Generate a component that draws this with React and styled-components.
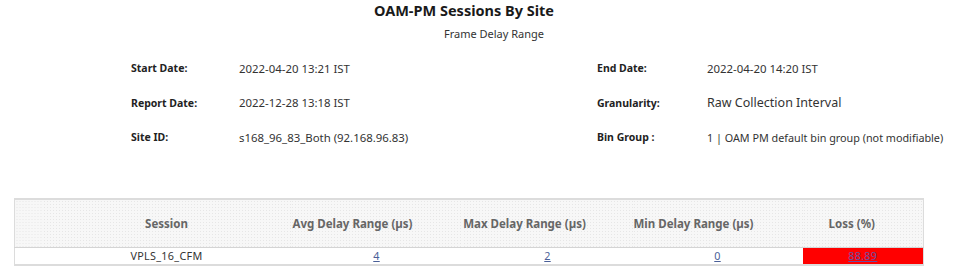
import React from "react";
import styled, { createGlobalStyle } from "styled-components";

const GlobalStyle = createGlobalStyle`
  body {
    margin: 0;
    background: #ffffff;
    font-family: "Noto Sans", "Open Sans", Arial, sans-serif;
    color: #333;
  }
`;

// label / value pairs, left then right column; size overrides the value font
const info = [
  ["Start Date:", "2022-04-20 13:21 IST", "End Date:", "2022-04-20 14:20 IST"],
  ["Report Date:", "2022-12-28 13:18 IST", "Granularity:", "Raw Collection Interval", 12.5],
  ["Site ID:", "s168_96_83_Both (92.168.96.83)", "Bin Group :", "1 | OAM PM default bin group (not modifiable)", 10.8],
];

const columns = [
  { key: "pad", label: "", width: 28, shift: 0 },
  { key: "session", label: "Session", width: 248, shift: 0 },
  { key: "avg", label: "Avg Delay Range (µs)", width: 172, shift: 48 },
  { key: "max", label: "Max Delay Range (µs)", width: 170, shift: 46 },
  { key: "min", label: "Min Delay Range (µs)", width: 170, shift: 48 },
  { key: "loss", label: "Loss (%)", width: 121, shift: 22 },
];

const rows = [{ session: "VPLS_16_CFM", avg: "4", max: "2", min: "0", loss: "88.89" }];

const Report = styled.div`
  width: 954px;
  height: 273px;
  overflow: hidden;
`;

const Header = styled.div`
  display: flex;
  flex-direction: column;
  align-items: center;
`;

const Title = styled.h1`
  margin: 0;
  padding-right: 26px;
  font-size: 14.5px;
  font-weight: 700;
  line-height: 20px;
  color: #1a1a1a;
`;

const Subtitle = styled.div`
  margin-top: 7px;
  padding-left: 34px;
  font-size: 11px;
  line-height: 14px;
  color: #333;
`;

const InfoGrid = styled.div`
  display: grid;
  grid-template-columns: 108px 358px 110px 1fr;
  grid-auto-rows: 34.5px;
  align-items: center;
  margin-top: 10px;
  padding-left: 131px;
`;

const Label = styled.div`
  font-size: 10.5px;
  font-weight: 700;
  color: #222;
`;

const Value = styled.div`
  font-size: ${(p) => p.$size || 11.4}px;
  color: #333;
  white-space: nowrap;
`;

const Table = styled.table`
  margin: 43px 0 0 14px;
  width: 909px;
  border-collapse: collapse;
  table-layout: fixed;
  border-top: 2px solid #dcdcdc;
  border-bottom: 2px solid #dcdcdc;
  border-left: 1px solid #dcdcdc;
  border-right: 1px solid #dcdcdc;
`;

const Th = styled.th`
  height: 47px;
  padding: 0 ${(p) => p.$shift}px 0 0;
  background-color: #f7f7f7;
  background-image: radial-gradient(#e6e6e6 0.6px, transparent 0.8px);
  background-size: 3px 3px;
  border-bottom: 1px solid #d4d4d4;
  font-size: 11.5px;
  font-weight: 700;
  color: #666;
  text-align: center;
  white-space: nowrap;
`;

const Td = styled.td`
  height: 16px;
  padding: 0;
  font-size: 10.8px;
  line-height: 16px;
  letter-spacing: 0.3px;
  text-align: center;
  color: #333;
  background: ${(p) => (p.$alert ? "#ff0000" : "#ffffff")};
`;

const CellLink = styled.a`
  color: ${(p) => (p.$alert ? "#6a4fa0" : "#4a5f98")};
  text-decoration: underline;
  cursor: pointer;
`;

export default function App() {
  return (
    <>
      <GlobalStyle />
      <Report>
        <Header>
          <Title>OAM-PM Sessions By Site</Title>
          <Subtitle>Frame Delay Range</Subtitle>
        </Header>
        <InfoGrid>
          {info.map(([l1, v1, l2, v2, size]) => (
            <React.Fragment key={l1}>
              <Label>{l1}</Label>
              <Value>{v1}</Value>
              <Label>{l2}</Label>
              <Value $size={size}>{v2}</Value>
            </React.Fragment>
          ))}
        </InfoGrid>
        <Table>
          <colgroup>
            {columns.map((c) => (
              <col key={c.key} style={{ width: c.width }} />
            ))}
          </colgroup>
          <thead>
            <tr>
              {columns.map((c) => (
                <Th key={c.key} $shift={c.shift}>
                  {c.label}
                </Th>
              ))}
            </tr>
          </thead>
          <tbody>
            {rows.map((r) => (
              <tr key={r.session}>
                <Td />
                <Td>{r.session}</Td>
                <Td>
                  <CellLink>{r.avg}</CellLink>
                </Td>
                <Td>
                  <CellLink>{r.max}</CellLink>
                </Td>
                <Td>
                  <CellLink>{r.min}</CellLink>
                </Td>
                <Td $alert>
                  <CellLink $alert>{r.loss}</CellLink>
                </Td>
              </tr>
            ))}
          </tbody>
        </Table>
      </Report>
    </>
  );
}
